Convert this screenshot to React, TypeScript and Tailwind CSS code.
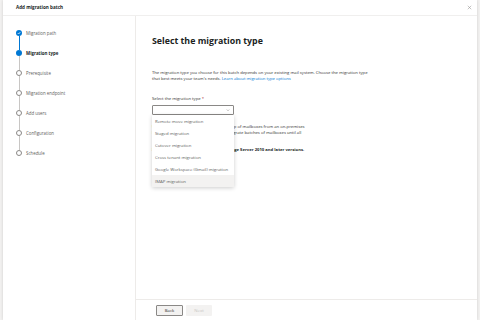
import React from 'react'

const steps = [
  { label: 'Migration path', state: 'done' },
  { label: 'Migration type', state: 'current' },
  { label: 'Prerequisite', state: 'todo' },
  { label: 'Migration endpoint', state: 'todo' },
  { label: 'Add users', state: 'todo' },
  { label: 'Configuration', state: 'todo' },
  { label: 'Schedule', state: 'todo' },
]

const options = [
  'Remote move migration',
  'Staged migration',
  'Cutover migration',
  'Cross tenant migration',
  'Google Workspace (Gmail) migration',
  'IMAP migration',
]

function StepDot({ state }: { state: string }) {
  if (state === 'done') {
    return (
      <div className="w-[6px] h-[6px] rounded-full bg-[#0078d4] flex items-center justify-center">
        <svg width="4" height="4" viewBox="0 0 8 8">
          <path d="M1.5 4.2 L3.3 6 L6.6 2.2" fill="none" stroke="white" strokeWidth="1.4" />
        </svg>
      </div>
    )
  }
  if (state === 'current') {
    return <div className="w-[6px] h-[6px] rounded-full bg-[#0078d4]" />
  }
  return <div className="w-[6px] h-[6px] rounded-full border-[0.75px] border-[#8a8886] bg-white" />
}

export default function App() {
  return (
    <div
      className="w-[480px] h-[320px] bg-[#f3f2f1] flex pl-[3px] pr-[3px] overflow-hidden"
      style={{ fontFamily: '"Open Sans", "Noto Sans", sans-serif' }}
    >
      <div className="flex-1 bg-white flex flex-col shadow-[0_0_3px_rgba(0,0,0,0.15)]">
        {/* Header */}
        <div className="h-[16px] flex items-center justify-between pl-[13px] pr-[5px] border-b border-[#f0efee]">
          <span className="text-[4.6px] font-bold text-[#201f1e]">Add migration batch</span>
          <svg width="5" height="5" viewBox="0 0 10 10" className="text-[#8a8886]">
            <path d="M1.5 1.5 L8.5 8.5 M8.5 1.5 L1.5 8.5" stroke="currentColor" strokeWidth="1" />
          </svg>
        </div>

        <div className="flex-1 flex">
          {/* Steps */}
          <nav className="w-[133px] border-r border-[#edebe9] pt-[14px] pl-[13px]">
            {steps.map((s, i) => (
              <div key={s.label}>
                <div className="flex items-center gap-[4px] h-[6px]">
                  <StepDot state={s.state} />
                  <span
                    className={`text-[4.4px] leading-none ${
                      s.state === 'current' ? 'font-bold text-[#201f1e]' : 'text-[#605e5c]'
                    }`}
                  >
                    {s.label}
                  </span>
                </div>
                {i < steps.length - 1 && (
                  <div
                    className={`ml-[2.5px] w-[1px] h-[14px] ${
                      s.state === 'done' ? 'bg-[#0078d4]' : 'bg-[#c8c6c4]'
                    }`}
                  />
                )}
              </div>
            ))}
          </nav>

          {/* Main */}
          <div className="flex-1 flex flex-col">
            <div className="flex-1 pl-[16px] pt-[21px] relative">
              <h1 className="text-[8.8px] font-bold text-[#201f1e] leading-none">Select the migration type</h1>
              <p className="mt-[24px] text-[4.2px] leading-[5.7px] text-[#323130] whitespace-nowrap">
                The migration type you choose for this batch depends on your existing mail system. Choose the migration type
                <br />
                that best meets your team's needs.{' '}
                <span className="text-[#0078d4]">Learn about migration type options</span>
              </p>
              <div className="mt-[16px] text-[4.2px] leading-none text-[#323130]">
                Select the migration type <span className="text-[#a4262c]">*</span>
              </div>
              <div className="mt-[4px] w-[82px] h-[10px] border-[0.75px] border-[#8a8886] rounded-[1px] flex items-center justify-end pr-[3px]">
                <svg width="4" height="4" viewBox="0 0 8 8">
                  <path d="M1.5 3 L4 5.5 L6.5 3" fill="none" stroke="#605e5c" strokeWidth="0.8" />
                </svg>
              </div>
              <p className="mt-[9px] text-[4.2px] leading-[6px] text-[#323130] whitespace-nowrap">
                <span className="block">Use remote move migration to move group of mailboxes from an on-premises</span>
                <span className="block">Exchange Server organization. You can migrate batches of mailboxes until all</span>
              </p>
              <p className="mt-[12px] text-[4.2px] leading-none font-bold text-[#201f1e] whitespace-nowrap">
                Supports hybrid deployment on Exchange Server 2010 and later versions.
              </p>

              {/* Dropdown menu */}
              <div className="absolute left-[16px] top-[99px] w-[82px] bg-white shadow-[0_1px_4px_rgba(0,0,0,0.2)] rounded-[1px]">
                {options.map((o) => (
                  <div
                    key={o}
                    className={`h-[12px] flex items-center px-[3px] text-[4.3px] text-[#605e5c] ${
                      o === 'IMAP migration' ? 'bg-[#f3f2f1]' : ''
                    }`}
                  >
                    {o}
                  </div>
                ))}
              </div>
            </div>

            {/* Footer */}
            <div className="h-[21px] border-t border-[#edebe9] flex items-center gap-[3px] pl-[20px]">
              <button className="w-[27px] h-[11px] border-[0.75px] border-[#8a8886] bg-[#f3f2f1] rounded-[1px] text-[4.3px] text-[#323130]">
                Back
              </button>
              <button className="w-[26px] h-[11px] bg-[#f3f2f1] rounded-[1px] text-[4.3px] text-[#c8c6c4]">
                Next
              </button>
            </div>
          </div>
        </div>
      </div>
    </div>
  )
}
